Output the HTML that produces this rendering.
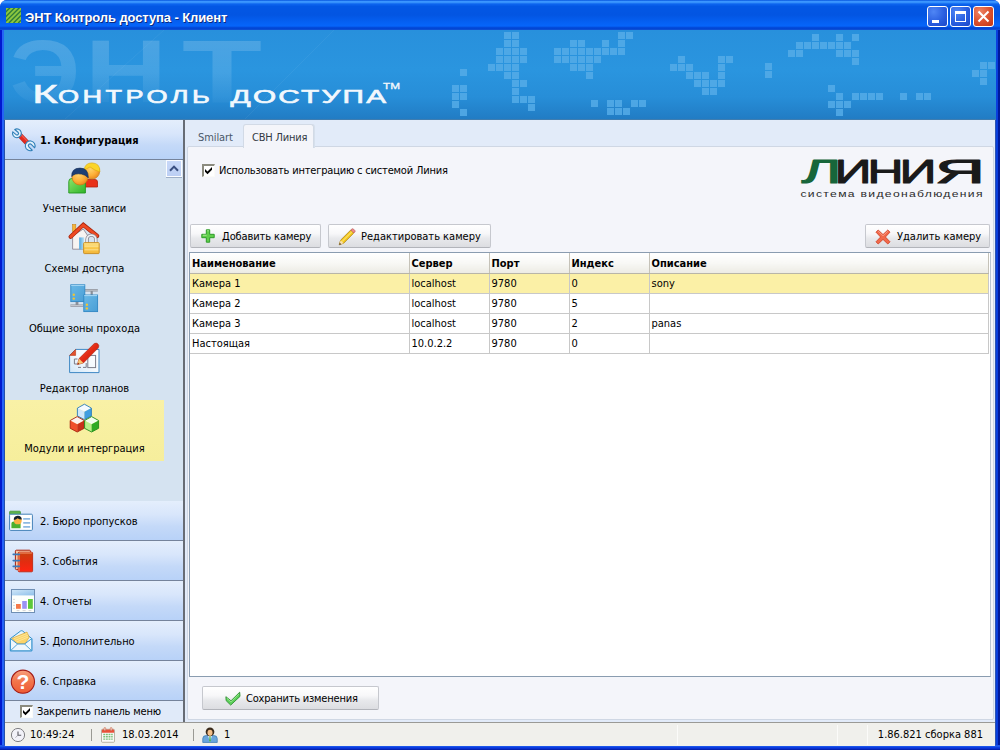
<!DOCTYPE html>
<html lang="ru">
<head>
<meta charset="utf-8">
<title>ЭНТ Контроль доступа - Клиент</title>
<style>
*{box-sizing:border-box;margin:0;padding:0}
html,body{width:1000px;height:750px;overflow:hidden;background:#fff}
body{position:relative;font-family:"DejaVu Sans Condensed","Liberation Sans",sans-serif;font-size:11px;color:#000}
.abs{position:absolute}
svg{position:absolute;overflow:visible}
#win{position:absolute;left:0;top:0;width:1000px;height:750px;background:#0a35dc;border-radius:7px 7px 0 0}
#bl{position:absolute;left:0;top:30px;width:4px;height:720px;background:linear-gradient(to right,#0019cf 0,#0019cf 1.6px,#2563f6 2.4px,#2563f6 4px)}
#bl:after{content:"";position:absolute;left:4px;top:90px;width:1px;height:626px;background:#2350aa}
#br{position:absolute;left:996px;top:30px;width:4px;height:720px;background:linear-gradient(to right,#0a3fdc 0,#0a3fdc 1.6px,#001a9c 2.4px,#001a9c 4px)}
#br:after{content:"";position:absolute;left:-1px;top:90px;width:1px;height:626px;background:#2c54b0}
#bb{position:absolute;left:0;top:745px;width:1000px;height:5px;background:linear-gradient(#2458e0 0,#1c54ea 1.5px,#0a3ee0 2.5px,#0a30d0 3.5px,#001a9e 5px)}
#title{position:absolute;left:0;top:0;width:1000px;height:30px;border-radius:7px 7px 0 0;
 background:linear-gradient(#0553dd 0,#3b96ff 1.5px,#3590fb 2.5px,#0d65ef 4px,#0357e4 6.5px,#0355e2 15px,#0560f2 22px,#0665fa 26px,#0349d8 27.6px,#0244d2 29px,#1558d6 30px)}
#title .txt{position:absolute;left:25px;top:10px;font:bold 13px "Liberation Sans",sans-serif;color:#fff;text-shadow:1px 1px 0 #0a2a80;white-space:nowrap;letter-spacing:-0.1px}
.tb{position:absolute;top:6px;width:21px;height:21px;border:1px solid #fff;border-radius:3px;background:radial-gradient(circle at 30% 25%,#4f86f5 0%,#2a5fe0 55%,#1c47c8 100%)}
.tb.close{background:radial-gradient(circle at 30% 25%,#ee8566 0%,#dc5230 50%,#c23612 100%)}
#banner{position:absolute;left:4px;top:30px;width:992px;height:90px;border-bottom:1px solid #3f7db0;background:linear-gradient(#2890dc 0%,#2a95df 45%,#278ed8 75%,#217cc4 100%);overflow:hidden}
#left{position:absolute;left:5px;top:120px;width:180px;height:602px;background:#d5e3f1;border-right:2px solid #676c75}
#main{position:absolute;left:185px;top:120px;width:810px;height:602px;background:#e2ebf9}
#status{position:absolute;left:5px;top:722px;width:990px;height:24px;background:#f0f0ec;border-top:1px solid #9a9a96}
.nav{position:absolute;left:0;width:178px;height:40px;background:linear-gradient(#e4eefc 0%,#d8e6fb 35%,#c4d9f8 65%,#b8d2f8 100%);border-bottom:1px solid #75839b}
.nav .t{position:absolute;left:35px;top:14px;white-space:nowrap}
.nav.first .t{font:bold 11px "DejaVu Sans Condensed","Liberation Sans",sans-serif;top:14px}
.item{position:absolute;left:0px;width:159px;height:60px}
.item.sel{background:linear-gradient(#f9f1a6,#f6ee9c);height:61px}
.item .t{position:absolute;left:0;width:100%;top:42px;text-align:center;white-space:nowrap}
.btn{position:absolute;height:24px;border:1px solid #c6c8ce;border-bottom-color:#b2b4ba;border-radius:2px;background:linear-gradient(#ffffff 0%,#f7f7f9 40%,#e8e9ec 60%,#dcdde1 100%)}
.btn .t{position:absolute;top:5px;white-space:nowrap}
.cb{position:absolute;width:13px;height:13px;background:#fff;border:solid;border-width:2px 1px 1px 2px;border-color:#8b8b7f #fbfbf8 #fbfbf8 #8b8b7f}
table{border-collapse:collapse;position:absolute;left:0;top:0;table-layout:fixed}
td,th{height:20px;border-right:1px solid #c8c8c8;border-bottom:1px solid #c8c8c8;padding:0 0 0 2px;text-align:left;font-weight:normal;white-space:nowrap;overflow:hidden}
th{padding-top:2px;font:bold 11px "DejaVu Sans Condensed","Liberation Sans",sans-serif;background:linear-gradient(#ffffff 0%,#f8f8f5 50%,#ecebe4 100%);border-bottom:1px solid #b8b5a8;border-right:1px solid #c5c2b8}
tr.sel td{background:#fbf0a6}
</style>
</head>
<body>
<div id="win">
 <div id="title">
  <svg style="left:6px;top:8px;overflow:hidden" width="15" height="15" viewBox="0 0 16 16"><rect width="16" height="16" fill="#8cc63f"/><g stroke="#2f7d3a" stroke-width="1.5"><path d="M-2 6L6 -2M-2 11L11 -2M-2 16L16 -2M3 16L16 3M8 16L16 8M13 16L16 13"/></g></svg>
  <div class="txt">ЭНТ Контроль доступа - Клиент</div>
  <div class="tb" style="left:927px"><div class="abs" style="left:4px;top:13px;width:7px;height:3px;background:#fff"></div></div>
  <div class="tb" style="left:950px"><div class="abs" style="left:4px;top:4px;width:11px;height:11px;border:1px solid #fff;border-top-width:3px"></div></div>
  <div class="tb close" style="left:973px"><svg style="left:4px;top:4px" width="11" height="11" viewBox="0 0 11 11"><path d="M0.5 0.5L10.5 10.5M10.5 0.5L0.5 10.5" stroke="#fff" stroke-width="2"/></svg></div>
 </div>
 <div id="banner">
  <!--BANNER--><svg style="left:0;top:0" width="992" height="90" viewBox="0 0 992 90">
<defs><linearGradient id="wm" gradientUnits="userSpaceOnUse" x1="0" y1="5" x2="0" y2="75"><stop offset="0" stop-color="#fff" stop-opacity="0.17"/><stop offset="0.55" stop-color="#fff" stop-opacity="0.12"/><stop offset="1" stop-color="#fff" stop-opacity="0.02"/></linearGradient></defs>
<g font-family="Liberation Sans, sans-serif" font-weight="bold" fill="url(#wm)" font-size="89">
<text x="6" y="72" textLength="70" lengthAdjust="spacingAndGlyphs">Э</text><text x="81" y="72" textLength="82" lengthAdjust="spacingAndGlyphs">Н</text><text x="178" y="72" textLength="80" lengthAdjust="spacingAndGlyphs">Т</text></g>
<path d="M160 0L60 90M330 0L240 90" stroke="#fff" stroke-opacity="0.05" stroke-width="1"/>
<path fill="#55abe8" fill-opacity="0.85" d="M456 39h7v7h-7zM448 55h7v7h-7zM456 55h7v7h-7zM448 63h7v7h-7zM456 63h7v7h-7zM448 71h7v7h-7zM456 79h7v7h-7zM500 2h7v7h-7zM508 2h7v7h-7zM500 10h7v7h-7zM508 10h7v7h-7zM492 18h7v7h-7zM500 18h7v7h-7zM508 18h7v7h-7zM516 18h7v7h-7zM492 26h7v7h-7zM500 26h7v7h-7zM508 26h7v7h-7zM516 26h7v7h-7zM484 34h7v7h-7zM492 34h7v7h-7zM500 34h7v7h-7zM508 34h7v7h-7zM500 42h7v7h-7zM508 42h7v7h-7zM508 50h7v7h-7zM516 50h7v7h-7zM508 58h7v7h-7zM508 66h7v7h-7zM516 66h7v7h-7zM524 66h7v7h-7zM524 74h7v7h-7zM614 2h7v7h-7zM622 2h7v7h-7zM566 10h7v7h-7zM574 10h7v7h-7zM598 10h7v7h-7zM614 10h7v7h-7zM550 18h7v7h-7zM558 18h7v7h-7zM566 18h7v7h-7zM574 18h7v7h-7zM582 18h7v7h-7zM590 18h7v7h-7zM598 18h7v7h-7zM606 18h7v7h-7zM614 18h7v7h-7zM550 26h7v7h-7zM558 26h7v7h-7zM566 26h7v7h-7zM574 26h7v7h-7zM582 26h7v7h-7zM590 26h7v7h-7zM566 34h7v7h-7zM574 34h7v7h-7zM582 34h7v7h-7zM582 42h7v7h-7zM587 70h7v7h-7zM603 70h7v7h-7zM611 70h7v7h-7zM627 70h7v7h-7zM635 70h7v7h-7zM603 78h7v7h-7zM611 78h7v7h-7zM619 78h7v7h-7zM674 26h7v7h-7zM714 26h7v7h-7zM722 26h7v7h-7zM666 34h7v7h-7zM674 34h7v7h-7zM682 34h7v7h-7zM714 34h7v7h-7zM682 42h7v7h-7zM690 42h7v7h-7zM698 42h7v7h-7zM714 42h7v7h-7zM690 50h7v7h-7zM698 50h7v7h-7zM706 50h7v7h-7zM714 50h7v7h-7zM698 58h7v7h-7zM706 58h7v7h-7zM761 33h7v7h-7zM761 41h7v7h-7zM808 4h7v7h-7zM832 4h7v7h-7zM848 4h7v7h-7zM792 12h7v7h-7zM800 12h7v7h-7zM808 12h7v7h-7zM816 12h7v7h-7zM824 12h7v7h-7zM832 12h7v7h-7zM840 12h7v7h-7zM784 20h7v7h-7zM792 20h7v7h-7zM832 20h7v7h-7zM840 20h7v7h-7zM848 20h7v7h-7zM848 28h7v7h-7zM824 55h7v7h-7zM832 63h7v7h-7zM848 63h7v7h-7zM856 63h7v7h-7zM864 63h7v7h-7zM872 63h7v7h-7zM824 71h7v7h-7zM832 71h7v7h-7zM840 71h7v7h-7zM832 79h7v7h-7zM896 63h7v7h-7zM912 63h7v7h-7zM920 63h7v7h-7zM976 32h7v7h-7zM984 32h7v7h-7zM968 40h7v7h-7zM976 40h7v7h-7zM976 48h7v7h-7z"/>
<g font-family="Liberation Sans, sans-serif" fill="#f2f8fd" stroke="#f2f8fd" stroke-width="0.6">
<text transform="translate(28.3,73) scale(1.75,1)" font-size="25">К</text>
<text transform="translate(54,73) scale(1.55,1)" font-size="17.5" textLength="98" lengthAdjust="spacing">ОНТРОЛЬ</text>
<text transform="translate(226.5,73) scale(1.7,1)" font-size="17.5" textLength="91.5" lengthAdjust="spacing">ДОСТУПА</text>
<text x="379" y="59" font-size="9" textLength="17" lengthAdjust="spacingAndGlyphs" stroke-width="0.3">TM</text>
</g>
</svg><!--/BANNER-->
 </div>
 <div id="left">
  <!--LEFT--><div class="nav first" style="top:0"><svg style="left:7px;top:9px" width="24" height="24" viewBox="0 0 24 24">
<path d="M7.4 5.8L15.6 14.4" stroke="#b8221a" stroke-width="5.2"/>
<path d="M7.4 5.8L15.6 14.4" stroke="#e42a20" stroke-width="4"/>
<path d="M8.4 5L16.4 13.4" stroke="#f2584a" stroke-width="1.2"/>
<g fill="#e4f2fb" stroke="#2f7fb8" stroke-width="1.1" stroke-linejoin="round">
<path transform="translate(4.9,4.3) rotate(-50)" d="M-1.5 -4.1V0.2A1.5 1.5 0 0 0 1.5 0.2V-4.1A4.4 4.4 0 1 1 -1.5 -4.1Z"/>
<path transform="translate(18.2,16.8) rotate(135)" d="M-1.7 -4.6V0.2A1.7 1.7 0 0 0 1.7 0.2V-4.6A4.9 4.9 0 1 1 -1.7 -4.6Z"/>
</g>
</svg><div class="t">1. Конфигурация</div></div>
<div class="abs" style="left:161px;top:40px;width:16px;height:17px;background:linear-gradient(#c8d8f8,#bccff4);border:1px solid #fafcff;box-shadow:0 1px 0 #9fb0c8"><svg style="left:2px;top:4px" width="10" height="7" viewBox="0 0 10 7"><path d="M1 5.8L5 1.6L9 5.8" fill="none" stroke="#3a4f80" stroke-width="2"/></svg></div>
<div class="item" style="top:40px"><svg style="left:63px;top:2px" width="32" height="32" viewBox="0 0 32 32">
<defs><radialGradient id="face" cx="0.4" cy="0.35" r="0.7"><stop offset="0" stop-color="#ffd36a"/><stop offset="0.6" stop-color="#fdae37"/><stop offset="1" stop-color="#e8861c"/></radialGradient>
<linearGradient id="grn" x1="0" y1="0" x2="1" y2="1"><stop offset="0" stop-color="#8ce46a"/><stop offset="1" stop-color="#2eb52a"/></linearGradient></defs>
<path d="M16.5 25V20Q16.5 17.5 19 17.5H27Q29.5 17.5 29.5 20V25Z" fill="#e8311a" stroke="#b3220f" stroke-width="0.8"/>
<circle cx="24" cy="9.5" r="7.6" fill="url(#face)" stroke="#c97a12" stroke-width="0.7"/>
<path d="M16.2 7.8Q17 0.9 24 0.9Q32.2 1.1 31.9 9.8Q27 8.8 22 4.9Q19 6.8 16.2 7.8Z" fill="#fbd52a" stroke="#d9a70e" stroke-width="0.6"/>
<path d="M0.8 31V19.5Q0.8 16.5 3.8 16.5H14.5Q17.4 16.5 17.4 19.5V31Z" fill="url(#grn)" stroke="#23961f" stroke-width="0.9"/>
<circle cx="12" cy="15" r="8" fill="url(#face)" stroke="#c97a12" stroke-width="0.7"/>
<path d="M3.7 14.6Q3.3 6.1 12 6.1Q20.5 6.1 20.3 15.8Q17 12.5 13.6 12.1Q10 11.5 7.6 12.1Q5.4 12.7 3.7 14.6Z" fill="#1d3f74" stroke="#0f2a55" stroke-width="0.6"/>
</svg><div class="t">Учетные записи</div></div>
<div class="item" style="top:100px"><svg style="left:63px;top:2px" width="32" height="32" viewBox="0 0 32 32">
<defs><linearGradient id="gold" x1="0" y1="0" x2="0" y2="1"><stop offset="0" stop-color="#fde38a"/><stop offset="0.5" stop-color="#f9c84a"/><stop offset="1" stop-color="#f3b63a"/></linearGradient>
<linearGradient id="door" x1="0" y1="0" x2="1" y2="0"><stop offset="0" stop-color="#4aa6df"/><stop offset="1" stop-color="#bfe2f6"/></linearGradient></defs>
<rect x="4.6" y="2.6" width="3.2" height="7" fill="#f6b53a" stroke="#c98516" stroke-width="0.6"/>
<path d="M4.6 14V27.2H20V14L15.3 7Z" fill="#f7f4f2" stroke="#8e8a96" stroke-width="0.9"/>
<rect x="11.2" y="15.4" width="5" height="12" fill="url(#door)"/>
<path d="M2.6 14.8L15.3 2.8L29.2 14" fill="none" stroke="#a8260e" stroke-width="4.2" stroke-linecap="round" stroke-linejoin="miter"/>
<path d="M2.8 14.6L15.3 3L29 13.8" fill="none" stroke="#ee4a23" stroke-width="2.8" stroke-linecap="round" stroke-linejoin="miter"/>
<path d="M19 21V17.5A4.4 4.4 0 0 1 27.8 17.5V21" fill="none" stroke="#8b8b95" stroke-width="3.4"/>
<path d="M19 21V17.5A4.4 4.4 0 0 1 27.8 17.5V21" fill="none" stroke="#eef0f4" stroke-width="1.8"/>
<rect x="15.6" y="20.6" width="15.6" height="11" rx="0.8" fill="url(#gold)" stroke="#c78a1c" stroke-width="0.9"/>
<path d="M16.5 24.2H30.4M16.5 27.8H30.4" stroke="#fbe7a0" stroke-width="0.8"/>
</svg><div class="t">Схемы доступа</div></div>
<div class="item" style="top:160px"><svg style="left:63px;top:2px" width="32" height="32" viewBox="0 0 32 32">
<defs><linearGradient id="srv" x1="0" y1="0" x2="1" y2="1"><stop offset="0" stop-color="#6ab8e6"/><stop offset="1" stop-color="#4a9fd6"/></linearGradient></defs>
<path d="M17 7H29.8V9.4H17ZM22.6 9.4H24.8V13H22.6Z" fill="#8a8f98"/><path d="M17 8.2H29.8" stroke="#d8dbe0" stroke-width="0.8"/>
<path d="M2.4 22.4H15.4V24.8H2.4ZM7.6 19.6H10.4V22.4H7.6Z" fill="#8a8f98"/><path d="M2.4 23.6H15.4" stroke="#d8dbe0" stroke-width="0.8"/>
<rect x="2.8" y="2.8" width="14" height="16.8" fill="url(#srv)" stroke="#2f87c4" stroke-width="0.9"/>
<path d="M3.2 3.4H16.4" stroke="#a8d8f4" stroke-width="1"/>
<circle cx="5.8" cy="12.8" r="1.2" fill="#f4c430"/><circle cx="5.8" cy="16.6" r="1.2" fill="#f4c430"/>
<rect x="15.8" y="13" width="13.8" height="16.6" fill="url(#srv)" stroke="#2f87c4" stroke-width="0.9"/>
<path d="M16.2 13.6H29.2" stroke="#a8d8f4" stroke-width="1"/>
<circle cx="18.9" cy="22.8" r="1.2" fill="#f4c430"/><circle cx="18.9" cy="26.4" r="1.2" fill="#f4c430"/>
</svg><div class="t">Общие зоны прохода</div></div>
<div class="item" style="top:220px"><svg style="left:63px;top:2px" width="32" height="32" viewBox="0 0 32 32">
<defs><linearGradient id="doc" x1="0" y1="1" x2="1" y2="0"><stop offset="0" stop-color="#cfe6f8"/><stop offset="0.5" stop-color="#f4f9fd"/><stop offset="1" stop-color="#ffffff"/></linearGradient>
<linearGradient id="pen" x1="0" y1="0" x2="1" y2="1"><stop offset="0" stop-color="#f4694a"/><stop offset="0.5" stop-color="#e32a14"/><stop offset="1" stop-color="#b81c0a"/></linearGradient></defs>
<path d="M7.6 7.4H31V30.6H1.6V13.4Z" fill="url(#doc)" stroke="#3f88c4" stroke-width="1"/>
<path d="M7.6 7.4V13.4H1.6Z" fill="#e2502c" stroke="#b83a1a" stroke-width="0.6"/>
<path d="M6.4 17H9.5M6.4 17V22M6.4 22H9M10 25.4H13M15 25.4H18.2V21" fill="none" stroke="#7c7c88" stroke-width="1"/>
<rect x="19.8" y="13.4" width="7.8" height="12.2" fill="none" stroke="#7c7c88" stroke-width="1"/>
<path d="M9.4 22.6L11 16.6L26.2 1.6Q28.4 0.4 30 2Q31.6 3.6 30.4 5.8L15.4 21Z" fill="url(#pen)" stroke="#a01a0a" stroke-width="0.5"/>
<path d="M9.4 22.6L11 16.6L15.4 21Z" fill="#f7c873"/>
<path d="M9.4 22.6L10 20.4L11.6 22Z" fill="#8a2a14"/>
</svg><div class="t">Редактор планов</div></div>
<div class="item sel" style="top:280px"><svg style="left:63px;top:2px" width="32" height="32" viewBox="0 0 32 32"><path d="M16.4 2.1999999999999997L23.4 6.1L16.4 9.8L9.399999999999999 6.1Z" fill="#f4faff"/><path d="M9.399999999999999 6.1L16.4 9.8V17.6L9.399999999999999 13.9Z" fill="#cfe8fa"/><path d="M23.4 6.1L16.4 9.8V17.6L23.4 13.9Z" fill="#3e9ee0"/><path d="M16.4 2.1999999999999997L23.4 6.1V13.9L16.4 17.6L9.399999999999999 13.9V6.1Z" fill="none" stroke="#2a7ab8" stroke-width="0.9" stroke-linejoin="round"/><path d="M9.2 14.6L16.2 18.5L9.2 22.2L2.1999999999999993 18.5Z" fill="#fdf2ee"/><path d="M2.1999999999999993 18.5L9.2 22.2V29.999999999999996L2.1999999999999993 26.299999999999997Z" fill="#f0502c"/><path d="M16.2 18.5L9.2 22.2V29.999999999999996L16.2 26.299999999999997Z" fill="#c8321a"/><path d="M9.2 14.6L16.2 18.5V26.299999999999997L9.2 29.999999999999996L2.1999999999999993 26.299999999999997V18.5Z" fill="none" stroke="#a8240e" stroke-width="0.9" stroke-linejoin="round"/><path d="M23.6 14.6L30.6 18.5L23.6 22.2L16.6 18.5Z" fill="#f2fdee"/><path d="M16.6 18.5L23.6 22.2V29.999999999999996L16.6 26.299999999999997Z" fill="#b8f08a"/><path d="M30.6 18.5L23.6 22.2V29.999999999999996L30.6 26.299999999999997Z" fill="#2eaa24"/><path d="M23.6 14.6L30.6 18.5V26.299999999999997L23.6 29.999999999999996L16.6 26.299999999999997V18.5Z" fill="none" stroke="#1f8a1a" stroke-width="0.9" stroke-linejoin="round"/></svg><div class="t">Модули и интерграция</div></div>
<div class="nav" style="top:381px"><svg style="left:4px;top:8px" width="24" height="24" viewBox="0 0 24 24">
<path d="M0.6 5.6V3Q0.6 2.2 1.4 2.2H10.6Q11.4 2.2 11.4 3V5.6Z" fill="#5cb24a" stroke="#3f9434" stroke-width="0.8"/>
<rect x="0.6" y="5.2" width="22.8" height="16.2" rx="1" fill="#fff" stroke="#4281b8" stroke-width="1"/>
<path d="M2.4 19.2V15Q2.4 12.6 5 12.6H9Q11.6 12.6 11.6 15V19.2Z" fill="#4cb02e"/>
<circle cx="8.8" cy="11.4" r="3.9" fill="#fbb040"/>
<path d="M4.8 11A4 4 0 0 1 12.8 10.4Q10.5 10.6 8.6 9.2Q7 10.8 4.8 11Z" fill="#14202e"/>
<path d="M14.2 9.8H21.2M14.2 13.8H21.2M14.2 17.8H21.2" stroke="#8db9e2" stroke-width="1.8"/>
</svg><div class="t">2. Бюро пропусков</div></div>
<div class="nav" style="top:421px"><svg style="left:4px;top:8px" width="24" height="24" viewBox="0 0 24 24">
<defs><linearGradient id="bk" x1="0" y1="0" x2="0" y2="1"><stop offset="0" stop-color="#c8420e"/><stop offset="0.5" stop-color="#e32c10"/><stop offset="1" stop-color="#ff2412"/></linearGradient></defs>
<rect x="6.4" y="1.2" width="15" height="19.4" rx="1" fill="#f9c8a4" stroke="#a8200e" stroke-width="1"/>
<rect x="9.2" y="3.2" width="14.4" height="19.6" rx="1" fill="url(#bk)" stroke="#c02812" stroke-width="0.9"/>
<path d="M10 22V4H22.8" fill="none" stroke="#fba478" stroke-width="0.9"/>
<path d="M4.2 5.4H10.4M4.2 11.6H10.4M4.2 17.4H10.4" stroke="#3b78b8" stroke-width="1.6" stroke-linecap="round"/>
</svg><div class="t">3. События</div></div>
<div class="nav" style="top:461px"><svg style="left:6px;top:8px" width="24" height="24" viewBox="0 0 24 24">
<defs><linearGradient id="ct" x1="0" y1="0" x2="1" y2="1"><stop offset="0" stop-color="#cfe6f8"/><stop offset="1" stop-color="#8fc0ea"/></linearGradient></defs>
<rect x="0.5" y="0.5" width="23" height="23" fill="#fdfffc" stroke="#6f8fb4" stroke-width="1"/>
<rect x="1" y="1" width="22" height="5.4" fill="url(#ct)"/>
<path d="M2.2 10.4H3.8M2.2 13.4H3.8M2.2 16.4H3.8M2.2 19.4H3.8M5.6 21.6H8.4M11.6 21.6H14.6M17.6 21.6H20.4" stroke="#c8c8cc" stroke-width="0.8"/>
<rect x="5" y="15" width="4.8" height="4.8" fill="#f47a4a"/><rect x="11.2" y="12" width="4.6" height="7.8" fill="#9a92f4"/><rect x="17" y="10" width="4.8" height="9.8" fill="#5cc83a"/>
</svg><div class="t">4. Отчеты</div></div>
<div class="nav" style="top:501px"><svg style="left:4px;top:8px" width="26" height="26" viewBox="0 0 26 26">
<path d="M1.4 9.6L11.6 2Q12.6 1.4 13.6 2L22.8 9.6V21.8H1.4Z" fill="#e8f4fc" stroke="#2f90cc" stroke-width="1"/>
<path d="M2.8 9.4L18 3.1L20.2 8.2L16 14.8H7.9Z" fill="#fbd468" stroke="#d8a83a" stroke-width="0.7"/>
<path d="M5 9.6L18.4 4.4M6 11.4L19 6.2M7.4 13L19.2 8" stroke="#fde9a4" stroke-width="0.8"/>
<path d="M1.4 9.6L8.6 15H15.6L22.8 9.6V21.8H1.4Z" fill="#eef7fd" stroke="#2f90cc" stroke-width="0.9" stroke-linejoin="round"/>
<path d="M1.8 21.4L8.6 15M22.4 21.4L15.6 15" stroke="#2f90cc" stroke-width="0.8"/>
</svg><div class="t">5. Дополнительно</div></div>
<div class="nav" style="top:541px"><svg style="left:5px;top:7.5px" width="26" height="26" viewBox="0 0 26 26">
<defs><linearGradient id="hp" x1="0" y1="0" x2="0" y2="1"><stop offset="0" stop-color="#f8a07c"/><stop offset="0.5" stop-color="#f2744a"/><stop offset="1" stop-color="#ee5a34"/></linearGradient></defs>
<circle cx="12.9" cy="12.7" r="11.6" fill="url(#hp)" stroke="#a21c18" stroke-width="1.1"/>
<text x="12.9" y="20.4" font-family="Liberation Sans, sans-serif" font-weight="bold" font-size="21" text-anchor="middle" fill="#fff">?</text>
</svg><div class="t">6. Справка</div></div>
<div class="abs" style="left:0;top:581px;width:178px;height:21px;background:#e0eaf9"><div class="cb" style="left:15px;top:4px"><svg style="left:1px;top:1px" width="7" height="8" viewBox="0 0 7 8"><path d="M0 2L2.5 4.5L7 0V2.7L2.5 7.2L0 4.7Z" fill="#000"/></svg></div><div class="abs" style="left:32px;top:4px;white-space:nowrap;letter-spacing:-0.15px">Закрепить панель меню</div></div><!--/LEFT-->
 </div>
 <div id="main">
  <!--MAIN-->
<div class="abs" style="left:5px;top:11px;width:50px;white-space:nowrap;color:#4a5868;padding-left:8px;letter-spacing:-0.1px">Smilart</div>
<div class="abs" id="panel" style="left:2px;top:26px;width:807px;height:574px;background:#f4f5fa;border:1px solid #cfd7e4;border-radius:2px"></div>
<div class="abs" style="left:58px;top:4px;width:71px;height:24px;background:#f4f5fa;border:1px solid #d2dae6;border-bottom:0;border-radius:3px 3px 0 0;box-shadow:1px 0 0 #d6e0ec"><div class="abs" style="left:8px;top:6px;white-space:nowrap;color:#333a44;letter-spacing:-0.2px">СВН Линия</div></div>
<div class="cb" style="left:17px;top:44px"><svg style="left:1px;top:1px" width="7" height="8" viewBox="0 0 7 8"><path d="M0 2L2.5 4.5L7 0V2.7L2.5 7.2L0 4.7Z" fill="#000"/></svg></div>
<div class="abs" style="left:34px;top:44px;white-space:nowrap;letter-spacing:-0.18px">Использовать интеграцию с системой Линия</div>
<svg style="left:610px;top:30px" width="195" height="55" viewBox="0 0 195 55">
<g font-family="Liberation Sans, sans-serif" font-size="33" stroke-width="1.0" stroke-linejoin="round" fill="#1a1a1a" stroke="#1a1a1a">
<text x="6.6" y="33.4" textLength="40" lengthAdjust="spacingAndGlyphs" fill="#17663a" stroke="#17663a">Л</text>
<text x="39.5" y="33.4" textLength="37" lengthAdjust="spacingAndGlyphs">И</text>
<text x="72.5" y="33.4" textLength="36" lengthAdjust="spacingAndGlyphs">Н</text>
<text x="104.5" y="33.4" textLength="37" lengthAdjust="spacingAndGlyphs">И</text>
<text x="140" y="33.4" textLength="50" lengthAdjust="spacingAndGlyphs">Я</text></g>
<text transform="translate(5.5,47.2) scale(1.4,1)" font-family="Liberation Sans, sans-serif" font-size="8.7" textLength="130" lengthAdjust="spacing" fill="#2a2a2a">система видеонаблюдения</text>
</svg>
<div class="btn" style="left:5px;top:104px;width:131px"><svg style="left:10px;top:4px" width="14" height="14" viewBox="0 0 14 14"><path d="M5.3 0.8H8.7V5.3H13.2V8.7H8.7V13.2H5.3V8.7H0.8V5.3H5.3Z" fill="#5fcf4a" stroke="#2f9a2a" stroke-width="1" stroke-linejoin="round"/><path d="M6.2 1.8H7.8M1.8 6.2H5.6" stroke="#b8f0a4" stroke-width="0.9"/></svg><div class="t" style="left:31px;letter-spacing:-0.1px">Добавить камеру</div></div>
<div class="btn" style="left:143px;top:104px;width:163px"><svg style="left:9px;top:3px" width="18" height="18" viewBox="0 0 18 18"><path d="M1.2 16.8L2.6 12.2L12.8 2L15.8 5L5.6 15.2Z" fill="#f6cc20" stroke="#a87a0c" stroke-width="0.8" stroke-linejoin="round"/><path d="M12.8 2L14 0.9Q14.8 0.4 15.6 1.2L16.8 2.4Q17.4 3.2 16.9 3.9L15.8 5Z" fill="#f08a8a" stroke="#b85a5a" stroke-width="0.7"/><path d="M1.2 16.8L2.6 12.2L5.6 15.2Z" fill="#f6deb0"/><path d="M1.2 16.8L1.8 14.8L3.2 16.2Z" fill="#3a2a1a"/><path d="M4 13.6L14 3.6" stroke="#fbe58a" stroke-width="1"/></svg><div class="t" style="left:32px">Редактировать камеру</div></div>
<div class="btn" style="left:680px;top:104px;width:125px"><svg style="left:9px;top:4px" width="16" height="16" viewBox="0 0 16 16"><path d="M3.2 1L8 5.6L12.8 1L15 3.2L10.4 8L15 12.8L12.8 15L8 10.4L3.2 15L1 12.8L5.6 8L1 3.2Z" fill="#f2694a" stroke="#d0452a" stroke-width="0.9" stroke-linejoin="round"/><path d="M3.2 2.2L8 6.8L12.8 2.2" fill="none" stroke="#f9a08a" stroke-width="0.9"/></svg><div class="t" style="left:31px">Удалить камеру</div></div>
<div class="abs" style="left:4px;top:132px;width:802px;height:425px;background:#fff;border:1px solid #8a9cb0;border-right-color:#b8c4d2;overflow:hidden"><table><colgroup><col style="width:219px"><col style="width:80px"><col style="width:80px"><col style="width:80px"><col style="width:339px"></colgroup><tr><th>Наименование</th><th>Сервер</th><th>Порт</th><th>Индекс</th><th>Описание</th></tr><tr class="sel"><td>Камера 1</td><td>localhost</td><td>9780</td><td>0</td><td>sony</td></tr><tr><td>Камера 2</td><td>localhost</td><td>9780</td><td>5</td><td></td></tr><tr><td>Камера 3</td><td>localhost</td><td>9780</td><td>2</td><td>panas</td></tr><tr><td>Настоящая</td><td>10.0.2.2</td><td>9780</td><td>0</td><td></td></tr></table></div>
<div class="btn" style="left:17px;top:566px;width:177px"><svg style="left:22px;top:4px" width="16" height="16" viewBox="0 0 16 16"><path d="M0.9 5.7L6 9.8L14.7 1.2L15 5.4L5.7 14.1L1.1 9.6Z" fill="#5cd05a" stroke="#2e8e30" stroke-width="0.9" stroke-linejoin="round"/><path d="M1.8 7.2L6 10.8L14 3" fill="none" stroke="#9ae890" stroke-width="0.9"/></svg><div class="t" style="left:43px;letter-spacing:-0.2px">Сохранить изменения</div></div><!--/MAIN-->
 </div>
 <div id="bl"></div><div id="br"></div><div id="bb"></div>
 <div id="status">
  <!--STATUS--><svg style="left:5px;top:4px" width="16" height="16" viewBox="0 0 16 16"><circle cx="8" cy="8" r="6.6" fill="#f2f2f8" stroke="#808084" stroke-width="1"/><path d="M8 4.4V8.2H11.2" fill="none" stroke="#5a5a62" stroke-width="1.1"/><path d="M8 8.2L5.4 10.6" stroke="#8a8a92" stroke-width="0.6"/></svg>
<div class="abs" style="left:672px;top:2px;width:1px;height:20px;background:#fbfbf9"></div>
<div class="abs" style="left:832px;top:2px;width:1px;height:20px;background:#fbfbf9"></div>
<div class="abs" style="left:862px;top:2px;width:1px;height:20px;background:#fbfbf9"></div>
<div class="abs" style="left:25px;top:5px;white-space:nowrap">10:49:24</div>
<div class="abs" style="left:86px;top:6px;width:1px;height:12px;background:#9a9a94"></div>
<svg style="left:96px;top:4px" width="14" height="16" viewBox="0 0 16 18" preserveAspectRatio="none"><rect x="0.6" y="2.6" width="14.8" height="14.6" rx="1" fill="#fbfbf8" stroke="#a8a090" stroke-width="0.9"/><path d="M1 3.4Q1 2.8 1.8 2.8H14.2Q15 2.8 15 3.4V6.4H1Z" fill="#e8523a"/><rect x="3.4" y="0.6" width="2" height="3.6" rx="0.8" fill="#f4d0c0" stroke="#b84a30" stroke-width="0.5"/><rect x="10.6" y="0.6" width="2" height="3.6" rx="0.8" fill="#f4d0c0" stroke="#b84a30" stroke-width="0.5"/><path d="M2.6 8.4H13.4M2.6 11H13.4M2.6 13.6H13.4" stroke="#7cc07a" stroke-width="1.6" stroke-dasharray="2.2 0.8"/></svg>
<div class="abs" style="left:117px;top:5px;white-space:nowrap">18.03.2014</div>
<div class="abs" style="left:188px;top:6px;width:1px;height:12px;background:#9a9a94"></div>
<svg style="left:197px;top:4px" width="16" height="16" viewBox="0 0 17 18" preserveAspectRatio="none"><path d="M0.8 17.4V13Q0.8 9.6 4.6 9.6H12.4Q16.2 9.6 16.2 13V17.4Z" fill="#6aa6dc" stroke="#3a78b4" stroke-width="0.8"/><path d="M6.4 9.8L8.5 17L10.6 9.8Z" fill="#f4f8fc"/><path d="M8 10.4H9L9.4 15.4L8.5 16.8L7.6 15.4Z" fill="#3aaa4a"/><ellipse cx="8.5" cy="5.4" rx="4.6" ry="4.9" fill="#3a2a1a"/><ellipse cx="8.5" cy="6.6" rx="2.7" ry="3.4" fill="#f4c08a"/></svg>
<div class="abs" style="left:219px;top:5px;white-space:nowrap">1</div>
<div class="abs" style="right:12px;top:5px;white-space:nowrap">1.86.821 сборка 881</div><!--/STATUS-->
 </div>
</div>
</body>
</html>
